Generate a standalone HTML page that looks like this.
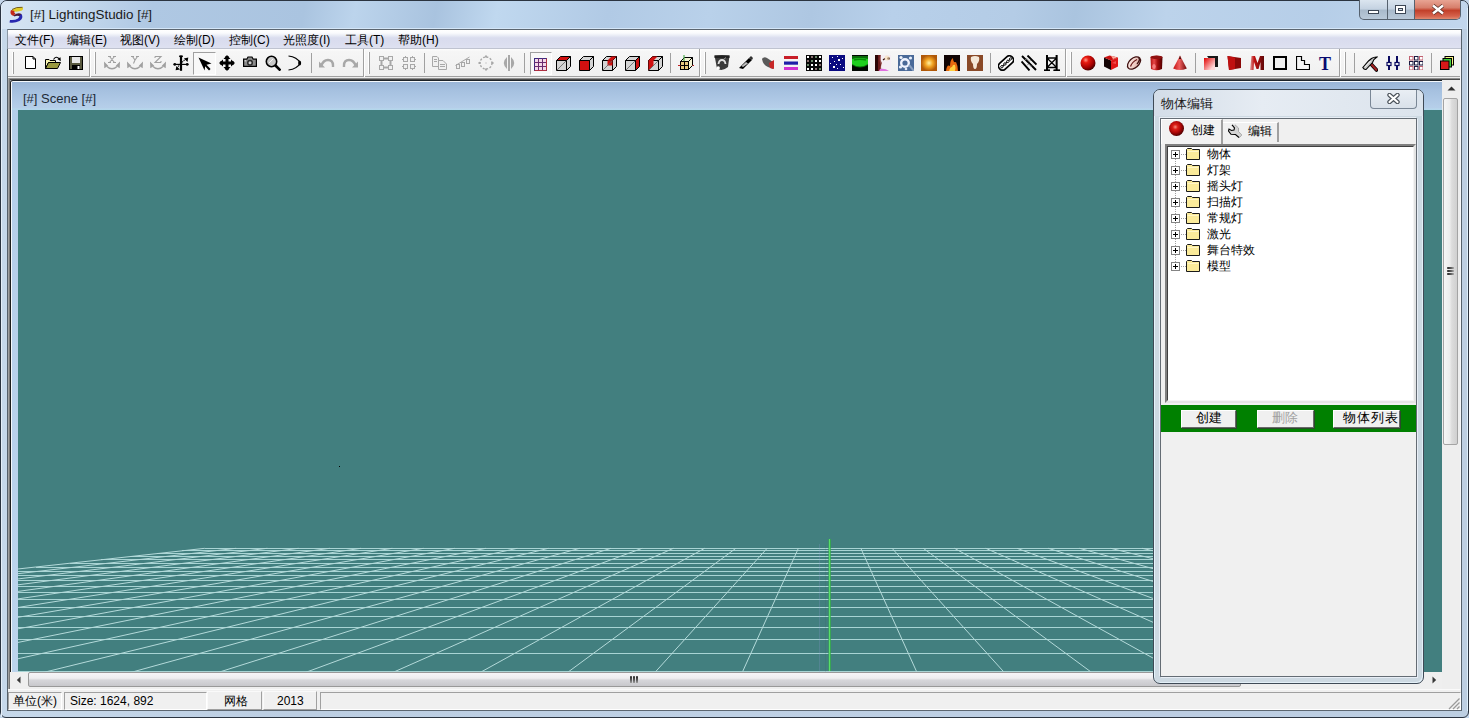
<!DOCTYPE html>
<html><head><meta charset="utf-8"><title>LightingStudio</title>
<style>
*{margin:0;padding:0;box-sizing:border-box}
html,body{width:1469px;height:718px;overflow:hidden;background:#c4d6ea;font-family:"Liberation Sans",sans-serif;font-size:12px;color:#000}
.a{position:absolute}
.t{position:absolute;white-space:nowrap;line-height:1}
</style></head><body>
<div class="a" style="left:0;top:0;width:1469px;height:718px;border:1px solid #2b3440;border-radius:7px 7px 6px 6px;background:linear-gradient(90deg,#c6d8ea 0,#bccee2 20%,#bed0e4 50%,#bccde2 80%,#bdcfe2 100%)"></div><div class="a" style="left:1px;top:1px;width:1467px;height:28px;border-radius:6px 6px 0 0;background:linear-gradient(100deg,#d8e6f4 0px,#c6daee 70px,#afc8e3 150px,#aac4e0 300px,#bcd4ec 350px,#a9c3df 430px,#c0d8ef 490px,#b1cae5 600px,#b9d1ea 700px,#aec7e2 800px,#b8d0ea 880px,#b4cce6 1000px,#aac4df 1060px,#bcd3eb 1150px,#b6cee8 1300px,#c4d8ee 1469px)"></div><div class="t" style="left:30px;top:8px;font-size:13.4px;color:#1a1a1a">[#] LightingStudio [#]</div><svg class="a" style="left:6px;top:3px" width="20" height="22" viewBox="0 0 20 22"><path d="M5.5 7.5Q10 3.5 17 4.5Q17.5 6.5 16 7.5Q12 9 8.5 8.5Z" fill="#e2cc26"/><path d="M6 6.5Q10 3.8 16.5 4.3" stroke="#6a5010" stroke-width="0.9" fill="none"/><path d="M5 7Q3 11 7.5 13L9.5 10.5Q7.5 9.5 8.5 8Z" fill="#c42818"/><path d="M7.5 12.5Q12 9 15.5 11L14.5 13.5Q11 12 8.5 13.5Z" fill="#4a1838"/><path d="M15.5 11Q18 15 13.5 18Q8.5 20.5 3.5 19.5L4 17Q9 17.5 12 15.5Q13.5 14 13.5 12.5Z" fill="#2828b0"/></svg><div class="a" style="left:1px;top:6px;width:1px;height:711px;background:#e4eef8"></div><div class="a" style="left:7px;top:29px;width:1px;height:682px;background:#56606a"></div><div class="a" style="left:1359px;top:0;width:102px;height:20px;border:1px solid #56616e;border-top:none;border-radius:0 0 5px 5px;overflow:hidden;background:linear-gradient(#dbe5ef,#c5d3e2 45%,#a9bacb 55%,#b9c9d9)"><div class="a" style="left:27px;top:0;width:1px;height:20px;background:#56616e"></div><div class="a" style="left:54px;top:0;width:1px;height:20px;background:#56616e"></div><div class="a" style="left:55px;top:0;width:46px;height:19px;background:linear-gradient(#e8a493,#d77f6c 40%,#c2402a 55%,#d5624c 85%,#e08a70)"></div><div class="a" style="left:8px;top:10px;width:11px;height:4px;border:1px solid #3c4654;background:#fff"></div><div class="a" style="left:35px;top:5px;width:11px;height:9px;border:1px solid #3c4654;background:#fff"><div class="a" style="left:2px;top:2px;width:5px;height:3px;border:1px solid #3c4654;background:#cfd9e4"></div></div><svg class="a" style="left:71px;top:4px" width="14" height="11" viewBox="0 0 14 11"><path d="M2 1.5L12 9.5M12 1.5L2 9.5" stroke="#5a3028" stroke-width="4"/><path d="M2 1.5L12 9.5M12 1.5L2 9.5" stroke="#fff" stroke-width="2.4"/></svg></div><div class="a" style="left:7px;top:29px;width:1455px;height:20px;border-top:1px solid #5c6670;border-left:1px solid #8c98a4;border-right:1px solid #8c98a4;background:linear-gradient(#ffffff 0,#fafbfd 3px,#e6e9f4 6px,#d9dcee 8px,#dbdeef 14px,#dfe2f1 19px)"></div><div class="a" style="left:8px;top:48px;width:1453px;height:1px;background:#bfc3d0"></div><div class="a" style="left:7px;top:28px;width:1455px;height:1px;background:#d4e6f8"></div><div class="t" style="left:15px;top:34px;font-size:12px;color:#000">文件(F)</div><div class="t" style="left:67px;top:34px;font-size:12px;color:#000">编辑(E)</div><div class="t" style="left:120px;top:34px;font-size:12px;color:#000">视图(V)</div><div class="t" style="left:174px;top:34px;font-size:12px;color:#000">绘制(D)</div><div class="t" style="left:229px;top:34px;font-size:12px;color:#000">控制(C)</div><div class="t" style="left:283px;top:34px;font-size:12px;color:#000">光照度(I)</div><div class="t" style="left:345px;top:34px;font-size:12px;color:#000">工具(T)</div><div class="t" style="left:398px;top:34px;font-size:12px;color:#000">帮助(H)</div><div class="a" style="left:8px;top:49px;width:1453px;height:28px;background:linear-gradient(#fdfdfd 0,#f6f6f6 8%,#f0f0f0 100%);border-bottom:1px solid #a0a0a0"></div><div class="a" style="left:8px;top:77px;width:1453px;height:1px;background:#ececec"></div><div class="a" style="left:8px;top:78px;width:1453px;height:611px;background:#abadb3"></div><div class="a" style="left:8px;top:78px;width:1453px;height:1px;background:#8f8f8f"></div><div class="a" style="left:8px;top:79px;width:1453px;height:1px;background:#4c4c4c"></div><div class="a" style="left:8px;top:78px;width:1px;height:611px;background:#a0a0a0"></div><div class="a" style="left:9px;top:79px;width:1px;height:610px;background:#7a7a7a"></div><div class="a" style="left:10px;top:80px;width:1432px;height:592px;border-left:1px solid #1c1c1c;border-top:1px solid #1c2228;border-radius:3px 0 0 0;background:linear-gradient(#f4f8fc 0,#f4f8fc 1px,#9ab5d6 1px,#a6c1e0 10px,#b5cee9 26px,#bcd4ec 100%)"></div><div class="a" style="left:11px;top:82px;width:1px;height:590px;background:#f4f8fc"></div><div class="t" style="left:23px;top:92px;font-size:13px;color:#1e2a36">[#] Scene [#]</div><div class="a" style="left:12px;top:108px;width:1430px;height:2px;background:linear-gradient(#b8d2ea,#b2d8ec)"></div><div class="a" style="left:18px;top:110px;width:1424px;height:562px;background:#427f7f"></div><svg class="a" style="left:18px;top:110px" width="1406" height="562" viewBox="0 0 1406 562"><g fill="#a8d4d4" shape-rendering="crispEdges"><rect x="186.9" y="438" width="1249.5" height="1"/><rect x="163.8" y="440" width="1295.5" height="1"/><rect x="139.1" y="443" width="1345.0" height="1"/><rect x="112.3" y="446" width="1398.5" height="1"/><rect x="83.4" y="449" width="1456.4" height="1"/><rect x="51.9" y="453" width="1519.3" height="1"/><rect x="17.6" y="457" width="1587.9" height="1"/><rect x="0.0" y="461" width="1643.1" height="1"/><rect x="0.0" y="465" width="1684.4" height="1"/><rect x="0.0" y="470" width="1729.9" height="1"/><rect x="0.0" y="476" width="1780.5" height="1"/><rect x="0.0" y="482" width="1837.0" height="1"/><rect x="0.0" y="489" width="1900.5" height="1"/><rect x="0.0" y="497" width="1972.4" height="1"/><rect x="0.0" y="506" width="2054.4" height="1"/><rect x="0.0" y="517" width="2148.9" height="1"/><rect x="0.0" y="529" width="2258.9" height="1"/><rect x="0.0" y="543" width="2388.7" height="1"/><rect x="0.0" y="561" width="2544.1" height="1"/></g><path d="M186.86 438.30L-1003.72 570.00M218.10 438.30L-912.96 570.00M249.33 438.30L-822.19 570.00M280.57 438.30L-731.42 570.00M311.81 438.30L-640.66 570.00M343.04 438.30L-549.89 570.00M374.28 438.30L-459.13 570.00M405.52 438.30L-368.36 570.00M436.76 438.30L-277.59 570.00M467.99 438.30L-186.83 570.00M499.23 438.30L-96.06 570.00M530.47 438.30L-5.30 570.00M561.70 438.30L85.47 570.00M592.94 438.30L176.24 570.00M624.18 438.30L267.00 570.00M655.41 438.30L357.77 570.00M686.65 438.30L448.54 570.00M717.89 438.30L539.30 570.00M749.13 438.30L630.07 570.00M780.36 438.30L720.83 570.00M811.60 438.30L811.60 570.00M842.84 438.30L902.37 570.00M874.07 438.30L993.13 570.00M905.31 438.30L1083.90 570.00M936.55 438.30L1174.66 570.00M967.79 438.30L1265.43 570.00M999.02 438.30L1356.20 570.00M1030.26 438.30L1446.96 570.00M1061.50 438.30L1537.73 570.00M1092.73 438.30L1628.50 570.00M1123.97 438.30L1719.26 570.00M1155.21 438.30L1810.03 570.00M1186.44 438.30L1900.79 570.00M1217.68 438.30L1991.56 570.00M1248.92 438.30L2082.33 570.00M1280.16 438.30L2173.09 570.00M1311.39 438.30L2263.86 570.00M1342.63 438.30L2354.62 570.00M1373.87 438.30L2445.39 570.00M1405.10 438.30L2536.16 570.00M1436.34 438.30L2626.92 570.00" stroke="#b4dada" stroke-width="1" fill="none"/><rect x="801" y="434" width="1" height="128" fill="#9a9ae0" opacity="0.2" shape-rendering="crispEdges"/><rect x="807" y="435" width="1" height="127" fill="#304050" opacity="0.1" shape-rendering="crispEdges"/><rect x="810" y="429" width="1" height="132" fill="#38a058" opacity="0.6" shape-rendering="crispEdges"/><rect x="811" y="429" width="1" height="132" fill="#58e068" shape-rendering="crispEdges"/><rect x="812" y="429" width="1" height="132" fill="#30b040" opacity="0.7" shape-rendering="crispEdges"/><rect x="321" y="356" width="1" height="1" fill="#000"/></svg><div class="a" style="left:1442px;top:80px;width:18px;height:609px;background:#eeeeee"></div><div class="a" style="left:1460px;top:49px;width:1px;height:661px;background:#f6f8fa"></div><div class="a" style="left:1461px;top:29px;width:1px;height:682px;background:#56626c"></div><div class="a" style="left:1467px;top:8px;width:1px;height:703px;background:#def0fc"></div><svg class="a" style="left:1447px;top:86px" width="9" height="5" viewBox="0 0 9 5"><path d="M0.5 4.5L4.5 0.5 8.5 4.5Z" fill="#303030"/></svg><div class="a" style="left:1443px;top:98px;width:15px;height:347px;border:1px solid #a4a4a4;border-radius:2px;background:linear-gradient(90deg,#f6f6f6,#ececec 45%,#dcdcdc 60%,#d0d0d0 100%)"></div><div class="a" style="left:1447px;top:267px;width:7px;height:2px;border-radius:1px 0 0 1px;background:linear-gradient(90deg,#202020,#606060 60%,#b0b0b0)"></div><div class="a" style="left:1447px;top:270px;width:7px;height:2px;border-radius:1px 0 0 1px;background:linear-gradient(90deg,#202020,#606060 60%,#b0b0b0)"></div><div class="a" style="left:1447px;top:273px;width:7px;height:2px;border-radius:1px 0 0 1px;background:linear-gradient(90deg,#202020,#606060 60%,#b0b0b0)"></div><div class="a" style="left:10px;top:672px;width:1432px;height:17px;background:#efefef"></div><svg class="a" style="left:16px;top:676px" width="5" height="8" viewBox="0 0 5 8"><path d="M4.5 0.5L0.8 4 4.5 7.5Z" fill="#383838"/></svg><div class="a" style="left:28px;top:672px;width:1213px;height:15px;border:1px solid #999;border-radius:2px;background:linear-gradient(#f6f6f8,#eeeef0 40%,#d6d6da 55%,#c8c8cc 100%)"></div><div class="a" style="left:630px;top:676px;width:2px;height:7px;border-radius:1px 1px 0 0;background:linear-gradient(#202020,#606060 60%,#a0a0a0)"></div><div class="a" style="left:633px;top:676px;width:2px;height:7px;border-radius:1px 1px 0 0;background:linear-gradient(#202020,#606060 60%,#a0a0a0)"></div><div class="a" style="left:636px;top:676px;width:2px;height:7px;border-radius:1px 1px 0 0;background:linear-gradient(#202020,#606060 60%,#a0a0a0)"></div><svg class="a" style="left:1432px;top:676px" width="5" height="8" viewBox="0 0 5 8"><path d="M0.5 0.5L4.2 4 0.5 7.5Z" fill="#383838"/></svg><div class="a" style="left:8px;top:689px;width:1453px;height:22px;background:#f0f0f0;border-bottom:1px solid #5c6670"></div><div class="a" style="left:8px;top:689px;width:1453px;height:1px;background:#fafafa"></div><div class="a" style="left:8px;top:692px;width:54px;height:18px;border-top:1px solid #a0a0a0;border-left:1px solid #a0a0a0;border-right:1px solid #fff;border-bottom:1px solid #fff"></div><div class="t" style="left:13px;top:695px;font-size:12px;color:#000">单位(米)</div><div class="a" style="left:64px;top:692px;width:143px;height:18px;border-top:1px solid #a0a0a0;border-left:1px solid #a0a0a0;border-right:1px solid #fff;border-bottom:1px solid #fff"></div><div class="t" style="left:70px;top:695px;font-size:12px;color:#000">Size: 1624, 892</div><div class="a" style="left:207px;top:691px;width:55px;height:19px;border-top:1px solid #fafafa;border-left:1px solid #fafafa;border-right:1px solid #a0a0a0;border-bottom:1px solid #a0a0a0"></div><div class="t" style="left:224px;top:695px;font-size:12px;color:#000">网格</div><div class="a" style="left:263px;top:691px;width:54px;height:19px;border-top:1px solid #fafafa;border-left:1px solid #fafafa;border-right:1px solid #a0a0a0;border-bottom:1px solid #a0a0a0"></div><div class="t" style="left:277px;top:695px;font-size:12px;color:#000">2013</div><div class="a" style="left:320px;top:692px;width:1141px;height:18px;border-top:1px solid #a0a0a0;border-left:1px solid #a0a0a0;border-right:1px solid #fff;border-bottom:1px solid #fff"></div><svg class="a" style="left:1448px;top:696px" width="13" height="14" viewBox="0 0 13 14"><path d="M1 13L11.5 2.5M5 13L11.5 6.5M9 13L11.5 10.5" stroke="#9a9a9a" stroke-width="1.3"/></svg><div class="a" style="left:1153px;top:89px;width:271px;height:595px;border:1px solid #3f4a56;border-radius:7px;background:#cdd9e2;box-shadow:inset 1px 1px 0 #e4f4fc,inset -1px -1px 0 #e4f0f8"></div><div class="a" style="left:1154px;top:90px;width:269px;height:26px;border-radius:6px 6px 0 0;background:linear-gradient(90deg,#d3dde8,#e6ecf3 40%,#dce4ed)"></div><div class="t" style="left:1161px;top:98px;font-size:12.5px;color:#1a1a1a">物体编辑</div><div class="a" style="left:1370px;top:90px;width:47px;height:19px;border:1px solid #7a8796;border-top:none;border-radius:0 0 4px 4px;background:linear-gradient(#e9eef4,#d9e1ea)"></div><svg class="a" style="left:1387px;top:93px" width="13" height="11" viewBox="0 0 13 11"><path d="M2.5 2L10.5 9M10.5 2L2.5 9" stroke="#4a525a" stroke-width="4.4" stroke-linecap="round"/><path d="M2.5 2L10.5 9M10.5 2L2.5 9" stroke="#fff" stroke-width="2.2" stroke-linecap="round"/></svg><div class="a" style="left:1160px;top:118px;width:257px;height:559px;background:#f0f0f0;border:1px solid #646c74;box-shadow:-1px -1px 0 #e8eef6,1px 1px 0 #e8eef6"></div><div class="a" style="left:1161px;top:119px;width:255px;height:286px;background:#f0f0f0"></div><div class="a" style="left:1161px;top:119px;width:62px;height:25px;background:#f2f2f2;border-right:2px solid #a0a0a0;border-top:1px solid #fff;border-left:1px solid #fff"></div><div class="a" style="left:1223px;top:122px;width:56px;height:20px;background:#f0f0f0;border-right:2px solid #a0a0a0;border-top:1px solid #fff"></div><div class="a" style="left:1169px;top:121px;width:15px;height:15px;border-radius:50%;background:radial-gradient(circle 10px at 42% 40%,#f49080 0,#dc2018 2.5px,#b00808 5.5px,#600000 8.5px,#380000 10px)"></div><div class="t" style="left:1191px;top:124px;font-size:12px">创建</div><svg class="a" style="left:1228px;top:123px" width="16" height="16" viewBox="0 0 16 16"><path d="M4 1.8L7 1.8 10.5 5 10.5 8.5 13.8 12 11.2 14.8 7.5 11.5 3 11.3 0.5 8 1 6 3.5 7.5 6 7 6.5 5Z" fill="#d4d4d4"/><path d="M7 1.8L10.5 5 10.5 8.5 13.8 12 11.2 14.8" fill="none" stroke="#9a9a9a" stroke-width="0.8"/><path d="M4 1.8L6.5 5 6 7 3.5 7.5 1 6 0.5 8 3 11.3 7.5 11.5 11 14.5" fill="none" stroke="#000" stroke-width="1.1"/></svg><div class="t" style="left:1248px;top:125px;font-size:12px">编辑</div><div class="a" style="left:1165px;top:144px;width:251px;height:259px;background:#fff;border-top:2px solid #808080;border-left:2px solid #808080;border-right:2px solid #e4e4e4;border-bottom:2px solid #e4e4e4"></div><div class="a" style="left:1167px;top:146px;width:247px;height:255px;border-top:1px solid #404040;border-left:1px solid #404040;border-right:1px solid #f4f4f4;border-bottom:1px solid #f4f4f4"></div><div class="a" style="left:1171px;top:150px;width:9px;height:9px;border:1px solid #848484;background:#fff"></div><div class="a" style="left:1173px;top:154px;width:5px;height:1px;background:#000"></div><div class="a" style="left:1175px;top:152px;width:1px;height:5px;background:#000"></div><div class="a" style="left:1181px;top:154px;width:5px;height:1px;background:repeating-linear-gradient(90deg,#a0a0a0 0,#a0a0a0 1px,transparent 1px,transparent 2px)"></div><div class="a" style="left:1175px;top:159px;width:1px;height:7px;background:repeating-linear-gradient(#a0a0a0 0,#a0a0a0 1px,transparent 1px,transparent 2px)"></div><svg class="a" style="left:1186px;top:147px" width="15" height="13" viewBox="0 0 15 13"><path d="M0.5 2.5L1.5 1.5H5.5L6.5 2.5H13.5V12.5H0.5Z" fill="#fbeb9a" stroke="#1a1a1a"/><path d="M1.5 4.5H12.5" stroke="#fff6c8"/></svg><div class="t" style="left:1207px;top:148px;font-size:12px">物体</div><div class="a" style="left:1171px;top:166px;width:9px;height:9px;border:1px solid #848484;background:#fff"></div><div class="a" style="left:1173px;top:170px;width:5px;height:1px;background:#000"></div><div class="a" style="left:1175px;top:168px;width:1px;height:5px;background:#000"></div><div class="a" style="left:1181px;top:170px;width:5px;height:1px;background:repeating-linear-gradient(90deg,#a0a0a0 0,#a0a0a0 1px,transparent 1px,transparent 2px)"></div><div class="a" style="left:1175px;top:175px;width:1px;height:7px;background:repeating-linear-gradient(#a0a0a0 0,#a0a0a0 1px,transparent 1px,transparent 2px)"></div><svg class="a" style="left:1186px;top:163px" width="15" height="13" viewBox="0 0 15 13"><path d="M0.5 2.5L1.5 1.5H5.5L6.5 2.5H13.5V12.5H0.5Z" fill="#fbeb9a" stroke="#1a1a1a"/><path d="M1.5 4.5H12.5" stroke="#fff6c8"/></svg><div class="t" style="left:1207px;top:164px;font-size:12px">灯架</div><div class="a" style="left:1171px;top:182px;width:9px;height:9px;border:1px solid #848484;background:#fff"></div><div class="a" style="left:1173px;top:186px;width:5px;height:1px;background:#000"></div><div class="a" style="left:1175px;top:184px;width:1px;height:5px;background:#000"></div><div class="a" style="left:1181px;top:186px;width:5px;height:1px;background:repeating-linear-gradient(90deg,#a0a0a0 0,#a0a0a0 1px,transparent 1px,transparent 2px)"></div><div class="a" style="left:1175px;top:191px;width:1px;height:7px;background:repeating-linear-gradient(#a0a0a0 0,#a0a0a0 1px,transparent 1px,transparent 2px)"></div><svg class="a" style="left:1186px;top:179px" width="15" height="13" viewBox="0 0 15 13"><path d="M0.5 2.5L1.5 1.5H5.5L6.5 2.5H13.5V12.5H0.5Z" fill="#fbeb9a" stroke="#1a1a1a"/><path d="M1.5 4.5H12.5" stroke="#fff6c8"/></svg><div class="t" style="left:1207px;top:180px;font-size:12px">摇头灯</div><div class="a" style="left:1171px;top:198px;width:9px;height:9px;border:1px solid #848484;background:#fff"></div><div class="a" style="left:1173px;top:202px;width:5px;height:1px;background:#000"></div><div class="a" style="left:1175px;top:200px;width:1px;height:5px;background:#000"></div><div class="a" style="left:1181px;top:202px;width:5px;height:1px;background:repeating-linear-gradient(90deg,#a0a0a0 0,#a0a0a0 1px,transparent 1px,transparent 2px)"></div><div class="a" style="left:1175px;top:207px;width:1px;height:7px;background:repeating-linear-gradient(#a0a0a0 0,#a0a0a0 1px,transparent 1px,transparent 2px)"></div><svg class="a" style="left:1186px;top:195px" width="15" height="13" viewBox="0 0 15 13"><path d="M0.5 2.5L1.5 1.5H5.5L6.5 2.5H13.5V12.5H0.5Z" fill="#fbeb9a" stroke="#1a1a1a"/><path d="M1.5 4.5H12.5" stroke="#fff6c8"/></svg><div class="t" style="left:1207px;top:196px;font-size:12px">扫描灯</div><div class="a" style="left:1171px;top:214px;width:9px;height:9px;border:1px solid #848484;background:#fff"></div><div class="a" style="left:1173px;top:218px;width:5px;height:1px;background:#000"></div><div class="a" style="left:1175px;top:216px;width:1px;height:5px;background:#000"></div><div class="a" style="left:1181px;top:218px;width:5px;height:1px;background:repeating-linear-gradient(90deg,#a0a0a0 0,#a0a0a0 1px,transparent 1px,transparent 2px)"></div><div class="a" style="left:1175px;top:223px;width:1px;height:7px;background:repeating-linear-gradient(#a0a0a0 0,#a0a0a0 1px,transparent 1px,transparent 2px)"></div><svg class="a" style="left:1186px;top:211px" width="15" height="13" viewBox="0 0 15 13"><path d="M0.5 2.5L1.5 1.5H5.5L6.5 2.5H13.5V12.5H0.5Z" fill="#fbeb9a" stroke="#1a1a1a"/><path d="M1.5 4.5H12.5" stroke="#fff6c8"/></svg><div class="t" style="left:1207px;top:212px;font-size:12px">常规灯</div><div class="a" style="left:1171px;top:230px;width:9px;height:9px;border:1px solid #848484;background:#fff"></div><div class="a" style="left:1173px;top:234px;width:5px;height:1px;background:#000"></div><div class="a" style="left:1175px;top:232px;width:1px;height:5px;background:#000"></div><div class="a" style="left:1181px;top:234px;width:5px;height:1px;background:repeating-linear-gradient(90deg,#a0a0a0 0,#a0a0a0 1px,transparent 1px,transparent 2px)"></div><div class="a" style="left:1175px;top:239px;width:1px;height:7px;background:repeating-linear-gradient(#a0a0a0 0,#a0a0a0 1px,transparent 1px,transparent 2px)"></div><svg class="a" style="left:1186px;top:227px" width="15" height="13" viewBox="0 0 15 13"><path d="M0.5 2.5L1.5 1.5H5.5L6.5 2.5H13.5V12.5H0.5Z" fill="#fbeb9a" stroke="#1a1a1a"/><path d="M1.5 4.5H12.5" stroke="#fff6c8"/></svg><div class="t" style="left:1207px;top:228px;font-size:12px">激光</div><div class="a" style="left:1171px;top:246px;width:9px;height:9px;border:1px solid #848484;background:#fff"></div><div class="a" style="left:1173px;top:250px;width:5px;height:1px;background:#000"></div><div class="a" style="left:1175px;top:248px;width:1px;height:5px;background:#000"></div><div class="a" style="left:1181px;top:250px;width:5px;height:1px;background:repeating-linear-gradient(90deg,#a0a0a0 0,#a0a0a0 1px,transparent 1px,transparent 2px)"></div><div class="a" style="left:1175px;top:255px;width:1px;height:7px;background:repeating-linear-gradient(#a0a0a0 0,#a0a0a0 1px,transparent 1px,transparent 2px)"></div><svg class="a" style="left:1186px;top:243px" width="15" height="13" viewBox="0 0 15 13"><path d="M0.5 2.5L1.5 1.5H5.5L6.5 2.5H13.5V12.5H0.5Z" fill="#fbeb9a" stroke="#1a1a1a"/><path d="M1.5 4.5H12.5" stroke="#fff6c8"/></svg><div class="t" style="left:1207px;top:244px;font-size:12px">舞台特效</div><div class="a" style="left:1171px;top:262px;width:9px;height:9px;border:1px solid #848484;background:#fff"></div><div class="a" style="left:1173px;top:266px;width:5px;height:1px;background:#000"></div><div class="a" style="left:1175px;top:264px;width:1px;height:5px;background:#000"></div><div class="a" style="left:1181px;top:266px;width:5px;height:1px;background:repeating-linear-gradient(90deg,#a0a0a0 0,#a0a0a0 1px,transparent 1px,transparent 2px)"></div><svg class="a" style="left:1186px;top:259px" width="15" height="13" viewBox="0 0 15 13"><path d="M0.5 2.5L1.5 1.5H5.5L6.5 2.5H13.5V12.5H0.5Z" fill="#fbeb9a" stroke="#1a1a1a"/><path d="M1.5 4.5H12.5" stroke="#fff6c8"/></svg><div class="t" style="left:1207px;top:260px;font-size:12px">模型</div><div class="a" style="left:1161px;top:405px;width:255px;height:27px;background:#008000"></div><div class="a" style="left:1181px;top:410px;width:55px;height:18px;background:#f0f0f0;border-top:1px solid #fff;border-left:1px solid #fff;border-right:1px solid #696969;border-bottom:1px solid #696969;box-shadow:1px 1px 0 #2a4a2a"></div><div class="t" style="left:1196px;top:412px;font-size:12.7px;letter-spacing:0px;color:#000">创建</div><div class="a" style="left:1257px;top:410px;width:57px;height:18px;background:#f0f0f0;border-top:1px solid #fff;border-left:1px solid #fff;border-right:1px solid #696969;border-bottom:1px solid #696969;box-shadow:1px 1px 0 #2a4a2a"></div><div class="t" style="left:1272px;top:412px;font-size:12.7px;letter-spacing:0px;color:#a0a0a0">删除</div><div class="a" style="left:1333px;top:410px;width:67px;height:18px;background:#f0f0f0;border-top:1px solid #fff;border-left:1px solid #fff;border-right:1px solid #696969;border-bottom:1px solid #696969;box-shadow:1px 1px 0 #2a4a2a"></div><div class="t" style="left:1343px;top:412px;font-size:12.7px;letter-spacing:0.9px;color:#000">物体列表</div><div class="a" style="left:12px;top:52px;width:1px;height:22px;background:#fff"></div><div class="a" style="left:13px;top:52px;width:1px;height:22px;background:#a0a0a0"></div><div class="a" style="left:89px;top:49px;width:1px;height:28px;background:#a0a0a0"></div><div class="a" style="left:90px;top:49px;width:1px;height:28px;background:#fff"></div><div class="a" style="left:94px;top:52px;width:1px;height:22px;background:#fff"></div><div class="a" style="left:95px;top:52px;width:1px;height:22px;background:#a0a0a0"></div><div class="a" style="left:363px;top:49px;width:1px;height:28px;background:#a0a0a0"></div><div class="a" style="left:364px;top:49px;width:1px;height:28px;background:#fff"></div><div class="a" style="left:368px;top:52px;width:1px;height:22px;background:#fff"></div><div class="a" style="left:369px;top:52px;width:1px;height:22px;background:#a0a0a0"></div><div class="a" style="left:699px;top:49px;width:1px;height:28px;background:#a0a0a0"></div><div class="a" style="left:700px;top:49px;width:1px;height:28px;background:#fff"></div><div class="a" style="left:704px;top:52px;width:1px;height:22px;background:#fff"></div><div class="a" style="left:705px;top:52px;width:1px;height:22px;background:#a0a0a0"></div><div class="a" style="left:1065px;top:49px;width:1px;height:28px;background:#a0a0a0"></div><div class="a" style="left:1066px;top:49px;width:1px;height:28px;background:#fff"></div><div class="a" style="left:1070px;top:52px;width:1px;height:22px;background:#fff"></div><div class="a" style="left:1071px;top:52px;width:1px;height:22px;background:#a0a0a0"></div><div class="a" style="left:1339px;top:49px;width:1px;height:28px;background:#a0a0a0"></div><div class="a" style="left:1340px;top:49px;width:1px;height:28px;background:#fff"></div><div class="a" style="left:1344px;top:52px;width:1px;height:22px;background:#fff"></div><div class="a" style="left:1345px;top:52px;width:1px;height:22px;background:#a0a0a0"></div><div class="a" style="left:1354px;top:53px;width:1px;height:20px;background:#a0a0a0"></div><svg class="a" style="left:25px;top:56px" width="11" height="13" viewBox="0 0 11 13"><path d="M0.5 0.5H8L10.5 3V12.5H0.5Z" fill="#fff" stroke="#000"/><path d="M8 0.5V3H10.5" fill="none" stroke="#000"/></svg><svg class="a" style="left:45px;top:56px" width="16" height="14" viewBox="0 0 16 14"><path d="M0.5 3.5H4L5 4.5H10.5V6.5H3.5L0.5 12.5Z" fill="#f8f4b0" stroke="#000"/><path d="M0.5 12.5L3.5 6.5H15.5L12.5 12.5Z" fill="#9a9a40" stroke="#000"/><path d="M8.5 3.5Q11 -0.5 14.3 2.8" fill="none" stroke="#000" stroke-width="1.1"/><path d="M12.3 3L15.8 5.2 15.5 1.3Z" fill="#000"/></svg><svg class="a" style="left:69px;top:56px" width="14" height="14" viewBox="0 0 14 14"><rect x="0.5" y="0.5" width="13" height="13" fill="#5a5a40" stroke="#000"/><rect x="3" y="1" width="8" height="6" fill="#e8e8e8"/><rect x="3" y="9" width="8" height="5" fill="#000"/><rect x="8.5" y="10" width="2" height="3" fill="#fff"/></svg><svg class="a" style="left:104px;top:55px" width="16" height="16" viewBox="0 0 16 16"><path d="M3 11.5Q8 16.2 13 11.5" fill="none" stroke="#a0a0a0" stroke-width="1.4"/><path d="M0 6.5L0.3 13.2 4.2 10.8Z M16 6.5L15.7 13.2 11.8 10.8Z" fill="#a0a0a0"/><path d="M5.5 1.5L10.5 7.5M10.5 1.5L5.5 7.5M4 1.5H7M9 1.5H12M4 7.5H7M9 7.5H12" stroke="#a0a0a0" stroke-width="1.1" fill="none"/></svg><svg class="a" style="left:127px;top:55px" width="16" height="16" viewBox="0 0 16 16"><path d="M3 11.5Q8 16.2 13 11.5" fill="none" stroke="#a0a0a0" stroke-width="1.4"/><path d="M0 6.5L0.3 13.2 4.2 10.8Z M16 6.5L15.7 13.2 11.8 10.8Z" fill="#a0a0a0"/><path d="M5.5 1.5L8 5 10.5 1.5M8 5L6.5 8.5M4 1.5H7M9 1.5H12" stroke="#a0a0a0" stroke-width="1.1" fill="none"/></svg><svg class="a" style="left:150px;top:55px" width="16" height="16" viewBox="0 0 16 16"><path d="M3 11.5Q8 16.2 13 11.5" fill="none" stroke="#a0a0a0" stroke-width="1.4"/><path d="M0 6.5L0.3 13.2 4.2 10.8Z M16 6.5L15.7 13.2 11.8 10.8Z" fill="#a0a0a0"/><path d="M5 1.5H11L5 7.5H11M5 1.5V3M11 7.5V6" stroke="#a0a0a0" stroke-width="1.1" fill="none"/></svg><svg class="a" style="left:173px;top:55px" width="16" height="16" viewBox="0 0 16 16"><path d="M8 1V15.8" stroke="#000" stroke-width="2.2"/><ellipse cx="8" cy="1.3" rx="2.1" ry="1.1"/><path d="M0.5 9.4H15.5" stroke="#000" stroke-width="1.2"/><circle cx="1.8" cy="9.4" r="1.3"/><circle cx="14.2" cy="9.4" r="1.3"/><path d="M5 11.5L12.5 4" stroke="#000" stroke-width="1.1" stroke-dasharray="1.2 0.8"/><path d="M15.3 2.6L10.9 3.4 14.5 7Z M2.6 15.3L3.4 10.9 7 14.5Z"/></svg><div class="a" style="left:193px;top:52px;width:23px;height:23px;border-top:1px solid #a0a0a0;border-left:1px solid #a0a0a0;border-right:1px solid #fff;border-bottom:1px solid #fff;background:#f8f8f8"></div><svg class="a" style="left:197px;top:57px" width="15" height="15" viewBox="0 0 15 15"><path d="M1.5 0.5L14.5 6.5 9.5 7.8 13.6 12 12 13.4 8.2 9.2 7.6 13.5Z" fill="#000"/></svg><svg class="a" style="left:219px;top:55px" width="16" height="16" viewBox="0 0 16 16"><path d="M8 1V15M1 8H15" stroke="#000" stroke-width="3"/><path d="M8 0L4.5 4H11.5Z M8 16L4.5 12H11.5Z M0 8L4 4.5V11.5Z M16 8L12 4.5V11.5Z" fill="#000"/></svg><svg class="a" style="left:243px;top:56px" width="14" height="12" viewBox="0 0 14 12"><path d="M0.6 3.2H3.8L5 1H9L10.2 3.2H13.4V10.4H0.6Z" fill="#8c8c8c" stroke="#000" stroke-width="1.2"/><circle cx="7" cy="6.7" r="3" fill="#2a2a2a"/><circle cx="7" cy="6.7" r="1.5" fill="#d0d0d0"/><rect x="1.6" y="4.2" width="1.6" height="1.2" fill="#e0e0e0"/></svg><svg class="a" style="left:265px;top:55px" width="16" height="16" viewBox="0 0 16 16"><circle cx="6.5" cy="6.5" r="5.2" fill="#c8c8c8" stroke="#000" stroke-width="1.6"/><path d="M10 10L15.5 15.5" stroke="#000" stroke-width="2.6"/><path d="M4 8L8 4" stroke="#f4f4f4" stroke-width="1"/></svg><svg class="a" style="left:288px;top:55px" width="14" height="16" viewBox="0 0 14 16"><path d="M0.5 1Q9 2 12.5 8 9 14 0.5 15" fill="none" stroke="#000" stroke-width="1.2"/><ellipse cx="11.6" cy="8" rx="1.5" ry="2.6" fill="#000"/></svg><div class="a" style="left:311px;top:53px;width:1px;height:20px;background:#a0a0a0"></div><svg class="a" style="left:319px;top:57px" width="16" height="11" viewBox="0 0 16 11"><path d="M2 9.5Q4 3 9 3 14 3 14 8.5V10" fill="none" stroke="#a8a8a8" stroke-width="2.4"/><path d="M0 4.5V10.5H6Z" fill="#a8a8a8"/></svg><svg class="a" style="left:342px;top:57px" width="16" height="11" viewBox="0 0 16 11"><path d="M14 9.5Q12 3 7 3 2 3 2 8.5V10" fill="none" stroke="#a8a8a8" stroke-width="2.4"/><path d="M16 4.5V10.5H10Z" fill="#a8a8a8"/></svg><svg class="a" style="left:379px;top:56px" width="14" height="14" viewBox="0 0 14 14"><rect x="2.5" y="2.5" width="9" height="9" fill="none" stroke="#a8a8a8" stroke-width="2"/><g fill="#f0f0f0" stroke="#a8a8a8"><rect x="0.5" y="0.5" width="4" height="4"/><rect x="9.5" y="0.5" width="4" height="4"/><rect x="0.5" y="9.5" width="4" height="4"/><rect x="9.5" y="9.5" width="4" height="4"/></g></svg><svg class="a" style="left:402px;top:56px" width="14" height="14" viewBox="0 0 14 14"><g fill="#f0f0f0" stroke="#a8a8a8"><rect x="1.5" y="1.5" width="4" height="4"/><rect x="8.5" y="1.5" width="4" height="4"/><rect x="1.5" y="8.5" width="4" height="4"/><rect x="8.5" y="8.5" width="4" height="4"/></g><path d="M0 3.5H1.5M12.5 3.5H14M0 10.5H1.5M12.5 10.5H14M3.5 0V1.5M10.5 0V1.5M3.5 12.5V14M10.5 12.5V14" stroke="#a8a8a8"/></svg><div class="a" style="left:424px;top:53px;width:1px;height:20px;background:#a0a0a0"></div><svg class="a" style="left:432px;top:56px" width="15" height="14" viewBox="0 0 15 14"><path d="M0.5 0.5H5L6.5 2V10.5H0.5Z" fill="#f0f0f0" stroke="#a8a8a8"/><path d="M6.5 4.5H11L14.5 8V13.5H6.5Z" fill="#f0f0f0" stroke="#a8a8a8"/><path d="M8 8.5H13M8 10.5H13M2 3.5H5M2 5.5H5" stroke="#a8a8a8"/></svg><svg class="a" style="left:455px;top:56px" width="15" height="14" viewBox="0 0 15 14"><path d="M0.5 9.5L14.5 1" stroke="#a8a8a8"/><g fill="#f0f0f0" stroke="#a8a8a8"><rect x="1.5" y="8.5" width="3" height="4"/><rect x="6.5" y="6.5" width="3" height="4"/><rect x="11.5" y="3.5" width="3" height="4"/></g></svg><svg class="a" style="left:478px;top:55px" width="16" height="16" viewBox="0 0 16 16"><circle cx="8" cy="8" r="6" fill="none" stroke="#a8a8a8" stroke-width="1.4" stroke-dasharray="2 1.5"/><g fill="#a8a8a8"><rect x="7" y="0.5" width="2" height="2"/><rect x="7" y="13.5" width="2" height="2"/><rect x="0.5" y="7" width="2" height="2"/><rect x="13.5" y="7" width="2" height="2"/><rect x="7.5" y="7.5" width="1" height="1"/></g></svg><svg class="a" style="left:501px;top:55px" width="16" height="16" viewBox="0 0 16 16"><path d="M8 0V16" stroke="#a8a8a8" stroke-width="2"/><path d="M6 2Q-0.5 8 6 14Z M10 2Q16.5 8 10 14Z" fill="#a8a8a8"/></svg><div class="a" style="left:524px;top:53px;width:1px;height:20px;background:#a0a0a0"></div><div class="a" style="left:530px;top:52px;width:22px;height:23px;border-top:1px solid #a0a0a0;border-left:1px solid #a0a0a0;border-right:1px solid #fff;border-bottom:1px solid #fff;background:#f8f8f8"></div><svg class="a" style="left:534px;top:58px" width="13" height="13" viewBox="0 0 13 13"><rect x="0.5" y="0.5" width="12" height="12" fill="#f4d8e8" stroke="#3a2a80"/><path d="M4.5 0V13M8.5 0V13M0 4.5H13M0 8.5H13" stroke="#6a2a70"/><path d="M0.5 12.5H12.5V0.5" fill="none" stroke="#b03040"/></svg><svg class="a" style="left:556px;top:56px" width="15" height="15" viewBox="0 0 15 15"><path d="M0.5 4.5L4.5 0.5H14.5L10.5 4.5Z" fill="#d01010" stroke="#000"/><path d="M10.5 4.5L14.5 0.5V10.5L10.5 14.5Z" fill="#d4d4d4" stroke="#000"/><path d="M0.5 4.5H10.5V14.5H0.5Z" fill="#d4d4d4" stroke="#000"/><path d="M1 14L10 5" stroke="#606060" stroke-width="0.8"/></svg><svg class="a" style="left:579px;top:56px" width="15" height="15" viewBox="0 0 15 15"><path d="M0.5 4.5L4.5 0.5H14.5L10.5 4.5Z" fill="#d4d4d4" stroke="#000"/><path d="M10.5 4.5L14.5 0.5V10.5L10.5 14.5Z" fill="#d4d4d4" stroke="#000"/><path d="M0.5 4.5H10.5V14.5H0.5Z" fill="#d01010" stroke="#000"/></svg><svg class="a" style="left:602px;top:56px" width="15" height="15" viewBox="0 0 15 15"><path d="M0.5 4.5L4.5 0.5H14.5L10.5 4.5Z" fill="#d4d4d4" stroke="#000"/><path d="M10.5 4.5L14.5 0.5V10.5L10.5 14.5Z" fill="#d4d4d4" stroke="#000"/><path d="M0.5 4.5H10.5V14.5H0.5Z" fill="#d4d4d4" stroke="#000"/><path d="M5.5 4.5L9.5 0.5H14.5L10.5 4.5Z" fill="#d01010"/><path d="M5.5 4.5H10.5V9.5H5.5Z" fill="#d01010"/><path d="M1 14L10 5" stroke="#606060" stroke-width="0.8"/></svg><svg class="a" style="left:625px;top:56px" width="15" height="15" viewBox="0 0 15 15"><path d="M0.5 4.5L4.5 0.5H14.5L10.5 4.5Z" fill="#d4d4d4" stroke="#000"/><path d="M10.5 4.5L14.5 0.5V10.5L10.5 14.5Z" fill="#d01010" stroke="#000"/><path d="M0.5 4.5H10.5V14.5H0.5Z" fill="#d4d4d4" stroke="#000"/><path d="M1 14L10 5" stroke="#606060" stroke-width="0.8"/></svg><svg class="a" style="left:648px;top:56px" width="15" height="15" viewBox="0 0 15 15"><path d="M0.5 4.5L4.5 0.5H14.5L10.5 4.5Z" fill="#d4d4d4" stroke="#000"/><path d="M10.5 4.5L14.5 0.5V10.5L10.5 14.5Z" fill="#d4d4d4" stroke="#000"/><path d="M0.5 4.5H10.5V14.5H0.5Z" fill="#d4d4d4" stroke="#000"/><path d="M0.5 14.5V4.5L4.5 0.5H9.5L5.5 4.5V9.5Z" fill="#d01010"/><path d="M1 14L10 5" stroke="#606060" stroke-width="0.8"/></svg><div class="a" style="left:670px;top:53px;width:1px;height:20px;background:#a0a0a0"></div><svg class="a" style="left:678px;top:55px" width="16" height="16" viewBox="0 0 16 16"><path d="M2.5 6.5L6.5 2.5H14.5L10.5 6.5Z" fill="#f4f4d4" stroke="#000"/><path d="M10.5 6.5L14.5 2.5V10.5L10.5 14.5Z" fill="#f4f4d4" stroke="#000"/><rect x="2.5" y="6.5" width="8" height="8" fill="#e8c880" stroke="#000"/><path d="M6.5 6.5V14.5M2.5 10.5H10.5" stroke="#000"/><path d="M6 0V6" stroke="#30a030"/><path d="M0 10.5H2.5M14.5 10.5H16" stroke="#c02020"/></svg><svg class="a" style="left:714px;top:55px" width="16" height="16" viewBox="0 0 16 16"><path d="M0.5 0.5Q8 -0.5 15.5 0.5L14 12Q8 17 3 13.5Z" fill="#3a3a3a"/><path d="M0.5 0.5H15.5V3H0.5Z" fill="#202020"/><path d="M4.5 9Q5 5 8 5 11 5 11.5 9" stroke="#e0e0e0" stroke-width="1.8" fill="none"/><path d="M10 4L12 2.5" stroke="#909090" stroke-width="1"/><circle cx="4.2" cy="13" r="1.7" fill="#fff"/></svg><svg class="a" style="left:738px;top:55px" width="16" height="16" viewBox="0 0 16 16"><path d="M1 13L11 3 14 5 5 14Z" fill="#000"/><path d="M3.5 11L8 7 10 8.5 5 12Z" fill="#c0c0c0"/><path d="M11 3L13 1 15 3 14 5Z" fill="#303030"/></svg><svg class="a" style="left:761px;top:56px" width="14" height="14" viewBox="0 0 14 14"><path d="M1 3Q3 0 6 2L12 6V13L7 11Q2 9 1 3Z" fill="#5a5a5a"/><path d="M8 7L13 4V13L9 12Z" fill="#c82828"/></svg><svg class="a" style="left:784px;top:56px" width="14" height="14" viewBox="0 0 14 14"><rect x="0" y="0" width="14" height="3" fill="#c81e28"/><rect x="0" y="5.5" width="14" height="3.2" fill="#1e1ea8"/><rect x="0" y="11" width="14" height="3" fill="#d030d0"/></svg><svg class="a" style="left:806px;top:55px" width="16" height="16" viewBox="0 0 16 16"><rect width="16" height="16" fill="#080808"/><rect x="1" y="1" width="2" height="2" fill="#fff"/><rect x="1" y="5" width="2" height="2" fill="#8a7070"/><rect x="1" y="9" width="2" height="2" fill="#6a8a6a"/><rect x="1" y="13" width="2" height="2" fill="#fff"/><rect x="5" y="1" width="2" height="2" fill="#8a7070"/><rect x="5" y="5" width="2" height="2" fill="#6a8a6a"/><rect x="5" y="9" width="2" height="2" fill="#fff"/><rect x="5" y="13" width="2" height="2" fill="#fff"/><rect x="9" y="1" width="2" height="2" fill="#6a8a6a"/><rect x="9" y="5" width="2" height="2" fill="#fff"/><rect x="9" y="9" width="2" height="2" fill="#fff"/><rect x="9" y="13" width="2" height="2" fill="#8a7070"/><rect x="13" y="1" width="2" height="2" fill="#fff"/><rect x="13" y="5" width="2" height="2" fill="#fff"/><rect x="13" y="9" width="2" height="2" fill="#8a7070"/><rect x="13" y="13" width="2" height="2" fill="#6a8a6a"/></svg><svg class="a" style="left:829px;top:55px" width="16" height="16" viewBox="0 0 16 16"><rect width="16" height="16" fill="#0a0a80"/><rect x="3" y="2" width="1" height="1" fill="#fff"/><rect x="8" y="1" width="1" height="1" fill="#fff"/><rect x="13" y="3" width="1" height="1" fill="#fff"/><rect x="1" y="8" width="1" height="1" fill="#fff"/><rect x="5" y="6" width="1" height="1" fill="#fff"/><rect x="9" y="4" width="2" height="2" fill="#fff"/><rect x="11" y="9" width="1" height="1" fill="#fff"/><rect x="4" y="11" width="2" height="2" fill="#fff"/><rect x="8" y="13" width="1" height="1" fill="#fff"/><rect x="14" y="12" width="1" height="1" fill="#fff"/><rect x="7" y="9" width="1" height="1" fill="#fff"/></svg><svg class="a" style="left:852px;top:55px" width="16" height="16" viewBox="0 0 16 16"><rect width="16" height="16" fill="#020802"/><path d="M0 1H16V10Q8 15 0 10Z" fill="#0a6a0a"/><path d="M0 4Q8 2 16 4V9Q8 14 0 9Z" fill="#20d020"/><path d="M2 5Q8 3.5 14 5" stroke="#0a8a0a" stroke-width="1.5" fill="none"/></svg><svg class="a" style="left:875px;top:55px" width="16" height="16" viewBox="0 0 16 16"><rect width="16" height="16" fill="#f4eef4"/><path d="M0 0H5Q4 6 6 10 4 14 6 16H0Z" fill="#2a0404"/><path d="M3 0H6Q5 5 7 8 5 12 7 16H3Z" fill="#7a2020" opacity="0.8"/><path d="M5 14Q10 13 14 16H4Z" fill="#e070e0"/><circle cx="13.5" cy="3.5" r="1.3" fill="#300800"/><path d="M8 5L10 3.5" stroke="#300808" stroke-width="1.2"/><circle cx="12" cy="3" r="2.5" fill="#f8e0b0" opacity="0.6"/></svg><svg class="a" style="left:898px;top:55px" width="16" height="16" viewBox="0 0 16 16"><rect width="16" height="16" fill="#4a6a98"/><circle cx="7" cy="8" r="3.8" fill="none" stroke="#f0f4ff" stroke-width="2.4"/><circle cx="3" cy="2.5" r="1.6" fill="#f0f4fc"/><circle cx="12.5" cy="3" r="1.6" fill="#e8f0fc"/><circle cx="2.5" cy="12" r="1.6" fill="#e8f0fc"/><circle cx="8" cy="14" r="1.3" fill="#e0e8f8"/><path d="M11 10L16 16" stroke="#8aa0c0" stroke-width="2"/></svg><svg class="a" style="left:921px;top:55px" width="16" height="16" viewBox="0 0 16 16"><defs><radialGradient id="or"><stop offset="0" stop-color="#fff0a0"/><stop offset="0.5" stop-color="#f0a020"/><stop offset="1" stop-color="#b05808"/></radialGradient></defs><rect width="16" height="16" fill="url(#or)"/></svg><svg class="a" style="left:944px;top:55px" width="16" height="16" viewBox="0 0 16 16"><rect width="16" height="16" fill="#100404"/><path d="M2 16Q3 9 6 11 6 5 9 3 9 8 12 7 14 11 14 16Z" fill="#e86a10"/><path d="M5 16Q6 12 8 12 9 9 11 10 12 13 11 16Z" fill="#ffd040"/></svg><svg class="a" style="left:967px;top:55px" width="16" height="16" viewBox="0 0 16 16"><rect width="16" height="16" fill="#8a4a28"/><path d="M4 2Q8 0 12 2 13 6 10 9 10 14 8 14 6 14 6 9 3 6 4 2Z" fill="#f4e8d8"/></svg><div class="a" style="left:990px;top:53px;width:1px;height:20px;background:#a0a0a0"></div><svg class="a" style="left:998px;top:55px" width="16" height="16" viewBox="0 0 16 16"><g transform="rotate(-42 8 8)"><rect x="-0.5" y="4" width="17" height="8" rx="3.5" fill="#fff" stroke="#000" stroke-width="1.7"/><path d="M1.5 8H14.5" stroke="#000" stroke-width="1.2"/><g fill="#fff" stroke="#000" stroke-width="0.9"><circle cx="2.5" cy="8" r="1.2"/><circle cx="6.5" cy="8" r="1.2"/><circle cx="10.5" cy="8" r="1.2"/><circle cx="14" cy="8" r="1.1"/></g></g></svg><svg class="a" style="left:1021px;top:55px" width="16" height="16" viewBox="0 0 16 16"><path d="M0.5 6.5L8.5 15.5M1 1L15 15M6.5 0.5L15.5 9.5" stroke="#000" stroke-width="1.9"/><path d="M4 5L6 3.5 8 6.5 10 5M6 10L8 9 10 11.5 11 10.5" stroke="#909090" stroke-width="0.8" fill="none"/></svg><svg class="a" style="left:1044px;top:55px" width="16" height="16" viewBox="0 0 16 16"><path d="M3 0V15.5M12.6 0V15.5M0 15.5H6M9.6 15.5H16M3 3H12.6M3 12.5H12.6M3 3L12.6 12.5M12.6 3L3 12.5" stroke="#000" stroke-width="1.3" fill="none"/><path d="M3 0V15.5M12.6 0V15.5M0 15.5H6M9.6 15.5H16" stroke="#000" stroke-width="1.9"/></svg><svg class="a" style="left:1080px;top:55px" width="16" height="16" viewBox="0 0 16 16"><defs><radialGradient id="sp" cx="0.35" cy="0.3" r="0.75"><stop offset="0" stop-color="#ff9888"/><stop offset="0.25" stop-color="#e81a10"/><stop offset="0.7" stop-color="#a00000"/><stop offset="1" stop-color="#3a0000"/></radialGradient></defs><circle cx="8" cy="8" r="7.5" fill="url(#sp)"/></svg><svg class="a" style="left:1103px;top:55px" width="16" height="16" viewBox="0 0 16 16"><path d="M1 2.5L8 5.5V15L1 11.5Z" fill="#140404"/><path d="M8 5.5L15 2.5V11.5L8 15Z" fill="#e01818"/><path d="M1 2.5L6.5 0.5 15 2.5 8 5.5Z" fill="#c81010"/><path d="M8 0.8L14 2.5 10 4Z" fill="#ffb0a0"/><path d="M9 8L13 6V9Z" fill="#ff7070" opacity="0.6"/></svg><svg class="a" style="left:1126px;top:55px" width="16" height="16" viewBox="0 0 16 16"><defs><linearGradient id="tor" x1="0" y1="0" x2="1" y2="1"><stop offset="0" stop-color="#fff4f0"/><stop offset="0.6" stop-color="#ecc8c0"/><stop offset="1" stop-color="#b07070"/></linearGradient></defs><ellipse cx="8" cy="8" rx="7.6" ry="4.8" transform="rotate(-42 8 8)" fill="url(#tor)" stroke="#401010" stroke-width="1.3"/><path d="M4.5 11.5Q6 7 11 4.5" stroke="#6a1818" stroke-width="1.3" fill="none"/><path d="M12.5 3Q15 4 11 9" stroke="#300808" stroke-width="1.2" fill="none"/></svg><svg class="a" style="left:1150px;top:55px" width="14" height="16" viewBox="0 0 14 16"><defs><linearGradient id="cyl" x1="0" y1="0" x2="1" y2="0"><stop offset="0" stop-color="#b01010"/><stop offset="0.3" stop-color="#e84848"/><stop offset="0.6" stop-color="#a00c0c"/><stop offset="1" stop-color="#500000"/></linearGradient></defs><path d="M0.5 2Q6.5 -0.5 12.5 2L12 14Q6.5 16.5 1 14Z" fill="url(#cyl)"/><ellipse cx="6.5" cy="2.2" rx="6" ry="1.8" fill="#901010"/><ellipse cx="4" cy="11.5" rx="1.8" ry="2.5" fill="#ff9a9a" opacity="0.7"/></svg><svg class="a" style="left:1173px;top:55px" width="14" height="16" viewBox="0 0 14 16"><defs><linearGradient id="con" x1="0" y1="0" x2="1" y2="0"><stop offset="0" stop-color="#c01010"/><stop offset="0.45" stop-color="#f06060"/><stop offset="1" stop-color="#700808"/></linearGradient></defs><path d="M7 0.5L13.8 13.5Q7 16.5 0.2 13.5Z" fill="url(#con)"/><path d="M7 0.5L6 4H8Z" fill="#300000"/></svg><div class="a" style="left:1195px;top:53px;width:1px;height:20px;background:#a0a0a0"></div><svg class="a" style="left:1204px;top:56px" width="14" height="14" viewBox="0 0 14 14"><defs><linearGradient id="rp" x1="0" y1="0" x2="1" y2="1"><stop offset="0" stop-color="#e00000"/><stop offset="0.8" stop-color="#ffd8d8"/></linearGradient></defs><path d="M3 0H14V11H11Z" fill="#181818"/><rect x="0" y="2" width="11" height="12" fill="url(#rp)"/></svg><svg class="a" style="left:1227px;top:56px" width="14" height="14" viewBox="0 0 14 14"><path d="M0.5 0L14 2V12L2 14Z" fill="#8a0808"/><path d="M0.5 0L8 1.5V13L2 14Z" fill="#c01010"/></svg><svg class="a" style="left:1250px;top:56px" width="14" height="14" viewBox="0 0 14 14"><defs><linearGradient id="mm" x1="0" y1="0" x2="1" y2="0"><stop offset="0" stop-color="#e0a0a0"/><stop offset="0.3" stop-color="#c01010"/><stop offset="1" stop-color="#600808"/></linearGradient></defs><path d="M0 14L1.5 0H5L7.5 7 10 0H14V14H10.5V6L8.5 13H6.5L4 6 3.5 14Z" fill="url(#mm)"/></svg><svg class="a" style="left:1273px;top:56px" width="14" height="14" viewBox="0 0 14 14"><rect x="1" y="1" width="12" height="12" fill="#f0f0f0" stroke="#000" stroke-width="2"/></svg><svg class="a" style="left:1296px;top:56px" width="14" height="14" viewBox="0 0 14 14"><path d="M0.5 0.5H5.5V4.5H8.5V8.5H13.5V13.5H0.5Z" fill="#f4f4f4" stroke="#000" stroke-width="1.2"/></svg><div class="t" style="left:1319px;top:55px;font-family:'Liberation Serif',serif;font-weight:bold;font-size:18px;color:#0a0a70">T</div><svg class="a" style="left:1362px;top:56px" width="16" height="16" viewBox="0 0 16 16"><path d="M9 8L14.5 14" stroke="#000" stroke-width="3.6" stroke-linecap="round"/><path d="M9 8L14.3 13.8" stroke="#a02020" stroke-width="2.2" stroke-linecap="round"/><path d="M0.8 11.5L6.5 5 9.5 2.5Q12 0.8 15 1 11.5 3 10.5 6.5L4 13.5Q2 13.8 0.8 11.5Z" fill="#c8c8c8" stroke="#000" stroke-width="1.1"/><path d="M3 11L8.5 5" stroke="#f4f4f4" stroke-width="1"/></svg><svg class="a" style="left:1386px;top:56px" width="14" height="14" viewBox="0 0 14 14"><path d="M3 0V14M11 0V14" stroke="#0a0a60" stroke-width="2"/><rect x="1" y="6.5" width="4" height="3" fill="#fff" stroke="#0a0a60" stroke-width="1.2"/><rect x="9" y="6.5" width="4" height="3" fill="#fff" stroke="#0a0a60" stroke-width="1.2"/></svg><svg class="a" style="left:1409px;top:56px" width="14" height="14" viewBox="0 0 14 14"><rect x="0.5" y="0.5" width="3.5" height="3.5" fill="#fff" stroke="#c06070"/><rect x="0.5" y="5.5" width="3.5" height="3.5" fill="#fff" stroke="#1a1a40"/><rect x="0.5" y="10.5" width="3.5" height="3.5" fill="#fff" stroke="#c06070"/><rect x="5.5" y="0.5" width="3.5" height="3.5" fill="#fff" stroke="#1a1a40"/><rect x="5.5" y="5.5" width="3.5" height="3.5" fill="#fff" stroke="#1a1a40"/><rect x="5.5" y="10.5" width="3.5" height="3.5" fill="#fff" stroke="#1a1a40"/><rect x="10.5" y="0.5" width="3.5" height="3.5" fill="#fff" stroke="#c06070"/><rect x="10.5" y="5.5" width="3.5" height="3.5" fill="#fff" stroke="#1a1a40"/><rect x="10.5" y="10.5" width="3.5" height="3.5" fill="#fff" stroke="#c06070"/></svg><div class="a" style="left:1431px;top:53px;width:1px;height:20px;background:#a0a0a0"></div><svg class="a" style="left:1440px;top:56px" width="14" height="14" viewBox="0 0 14 14"><rect x="5" y="0.5" width="8.5" height="8.5" fill="#f8f880" stroke="#000"/><rect x="3" y="2.5" width="8.5" height="8.5" fill="#40d040" stroke="#000"/><rect x="0.5" y="5" width="8.5" height="8.5" fill="#d81818" stroke="#000"/></svg></body></html>
